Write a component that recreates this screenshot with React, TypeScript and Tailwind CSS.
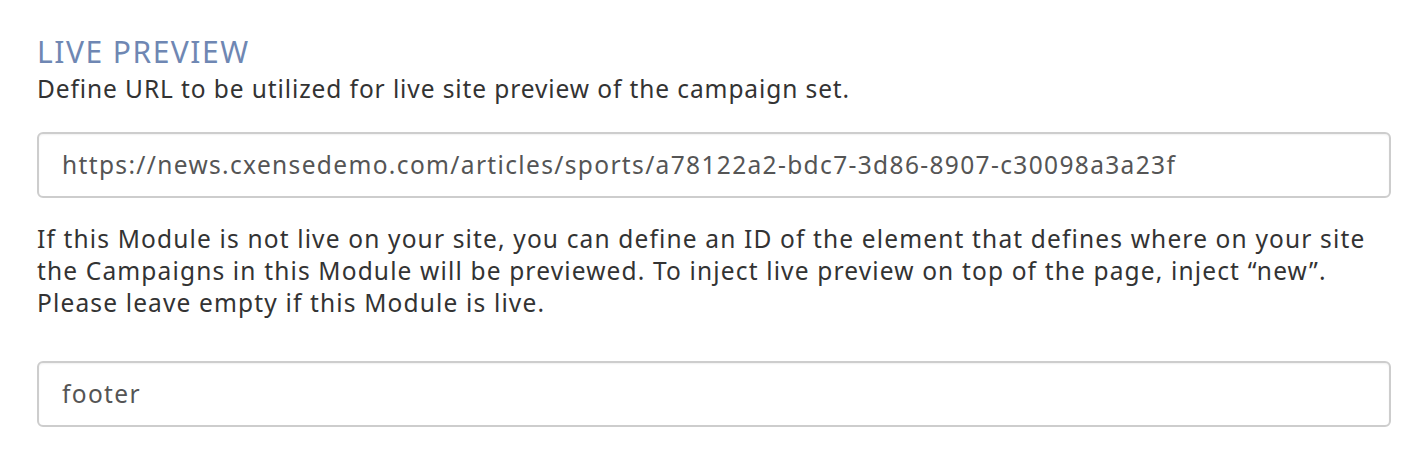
const fieldClass =
  "h-[66px] rounded-[6px] border-2 border-[#cdcdcd] flex items-center px-[23px] text-[24.5px] tracking-[1.35px] text-[#555] whitespace-nowrap shadow-[inset_0_1px_2px_rgba(0,0,0,0.06)]";

const copyClass = "text-[24.5px] leading-[32px] text-[#333] whitespace-nowrap";

export default function App() {
  return (
    <div
      className="w-[1426px] h-[466px] bg-white pl-[37px] pr-[35px] pt-[31px]"
      style={{ fontFamily: "'Noto Sans', sans-serif" }}
    >
      <h2 className="text-[30px] leading-[42px] tracking-[1.5px] text-[#6f87b3]">LIVE PREVIEW</h2>
      <p className={`${copyClass} tracking-[0.9px]`}>
        Define URL to be utilized for live site preview of the campaign set.
      </p>
      <div className={`mt-[27px] ${fieldClass}`}>
        https://news.cxensedemo.com/articles/sports/a78122a2-bdc7-3d86-8907-c30098a3a23f
      </div>
      <p className={`mt-[25px] ${copyClass} tracking-[1.15px]`}>
        If this Module is not live on your site, you can define an ID of the element that defines where on your site
        <br />
        the Campaigns in this Module will be previewed. To inject live preview on top of the page, inject “new”.
        <br />
        Please leave empty if this Module is live.
      </p>
      <div className={`mt-[42px] ${fieldClass}`}>footer</div>
    </div>
  );
}
